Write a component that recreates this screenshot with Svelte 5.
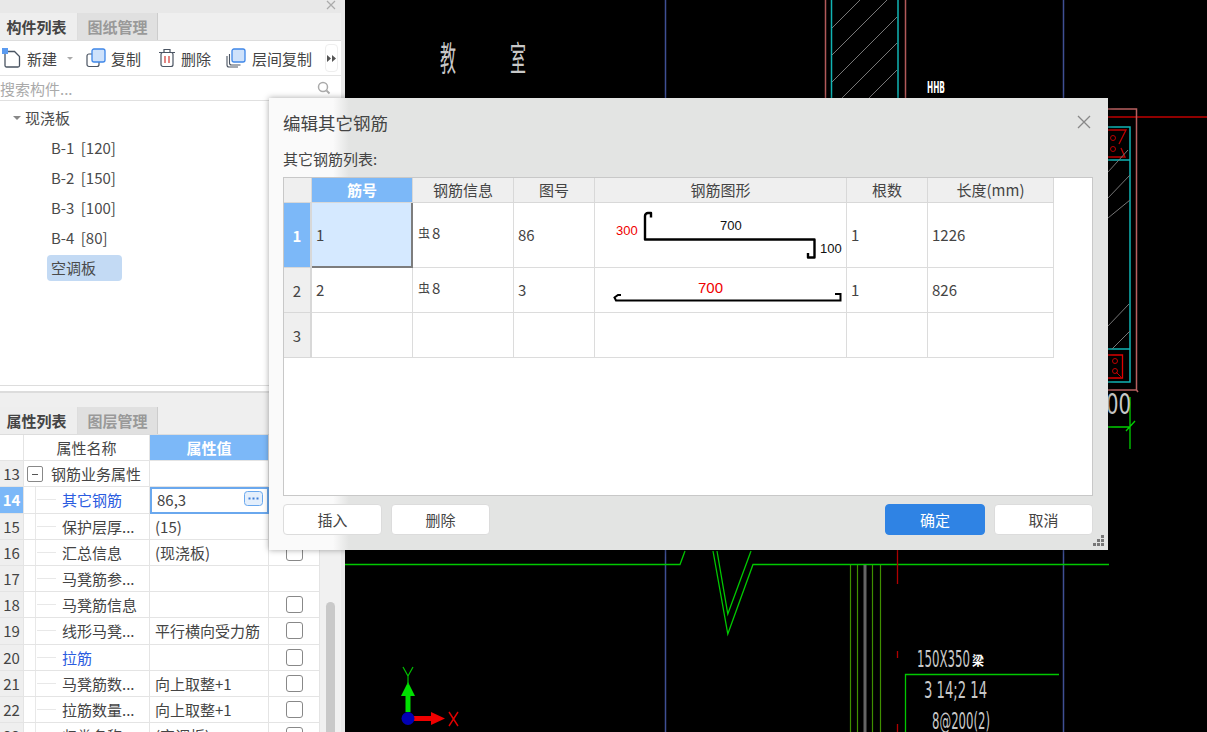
<script>
	const tree = ["B-1 [120]", "B-2 [150]", "B-3 [100]", "B-4 [80]"];

	// property rows of the lower panel
	const props = [
		{ n: 13, name: "钢筋业务属性", group: true },
		{ n: 14, name: "其它钢筋", value: "86,3", blue: true, active: true },
		{ n: 15, name: "保护层厚...", value: "(15)" },
		{ n: 16, name: "汇总信息", value: "(现浇板)", check: true },
		{ n: 17, name: "马凳筋参..." },
		{ n: 18, name: "马凳筋信息", check: true },
		{ n: 19, name: "线形马凳...", value: "平行横向受力筋", check: true },
		{ n: 20, name: "拉筋", blue: true, check: true },
		{ n: 21, name: "马凳筋数...", value: "向上取整+1", check: true },
		{ n: 22, name: "拉筋数量...", value: "向上取整+1", check: true },
		{ n: 23, name: "归类名称", value: "(空调板)", check: true }
	];

	const heads = ["筋号", "钢筋信息", "图号", "钢筋图形", "根数", "长度(mm)"];

	// hatching of the wall section on the drawing, y where each line leaves the left side
	const hatchTop = [28, 55, 82, 108, 135];
</script>

<div class="app">
	<aside class="side">
		<div class="closebar">
			<svg width="10" height="10" viewBox="0 0 10 10"><path d="M1 1l8 8M9 1l-8 8" stroke="#aaa" stroke-width="1.2" /></svg>
		</div>
		<div class="tabs">
			<div class="tab on">构件列表</div>
			<div class="tab">图纸管理</div>
		</div>
		<div class="toolbar">
			<div class="tool first">
				<svg width="20" height="20" viewBox="0 0 20 20">
					<path d="M3 3.5h9.5l5 5v9a1.5 1.5 0 0 1-1.5 1.5H4.500a1.500 1.500 0 0 1-1.500-1.500z" fill="#fff" stroke="#4a5462" stroke-width="1.3" />
					<rect x="0" y="0" width="6" height="6" fill="#5b9bf0" />
				</svg>
				<span>新建</span>
				<i class="caret"></i>
			</div>
			<div class="tool copy">
				<svg width="20" height="20" viewBox="0 0 20 20">
					<rect x="1" y="6" width="12" height="12.500" rx="2" fill="#fff" stroke="#4a5462" stroke-width="1.200" />
					<rect x="6" y="1" width="13" height="13" rx="2" fill="#cfe2fb" stroke="#3f87e8" stroke-width="1.300" />
				</svg>
				<span>复制</span>
			</div>
			<div class="tool del">
				<svg width="18" height="20" viewBox="0 0 18 20">
					<path d="M1 4.500h16M6 4V1.500h6V4" fill="none" stroke="#4a5462" stroke-width="1.200" />
					<rect x="3" y="4.500" width="12" height="14" rx="2" fill="#fff" stroke="#4a5462" stroke-width="1.200" />
					<path d="M7 8v7M11 8v7" stroke="#d9534f" stroke-width="1.400" />
				</svg>
				<span>删除</span>
			</div>
			<div class="tool floor">
				<svg width="20" height="20" viewBox="0 0 20 20">
					<path d="M1 8v9a2 2 0 0 0 2 2h9" fill="none" stroke="#4a5462" stroke-width="1.100" />
					<path d="M3.500 6v9a2 2 0 0 0 2 2h9" fill="none" stroke="#4a5462" stroke-width="1.100" />
					<rect x="6" y="1" width="13" height="13" rx="2" fill="#cfe2fb" stroke="#3f87e8" stroke-width="1.300" />
				</svg>
				<span>层间复制</span>
			</div>
			<div class="more">
				<svg width="9" height="7" viewBox="0 0 9 7"><path d="M0 0l4 3.500-4 3.500zM5 0l4 3.500-4 3.500z" fill="#555" /></svg>
			</div>
		</div>
		<div class="search">
			<span>搜索构件...</span>
			<svg width="14" height="14" viewBox="0 0 14 14"><circle cx="6" cy="6" r="4.500" fill="none" stroke="#aaa" stroke-width="1.500" /><path d="M9.500 9.500l3 3" stroke="#aaa" stroke-width="1.800" /></svg>
		</div>
		<div class="tree">
			<div class="node root"><i class="caret"></i>现浇板</div>
			{#each tree as t}
				<div class="node">{t}</div>
			{/each}
			<div class="node"><span class="picked">空调板</span></div>
		</div>
		<div class="splitter"></div>
		<div class="tabs second">
			<div class="tab on">属性列表</div>
			<div class="tab">图层管理</div>
		</div>
		<div class="propwrap">
			<div class="props">
				<div class="prow head">
					<div class="num"></div>
					<div class="pname">属性名称</div>
					<div class="pval selected">属性值</div>
					<div class="pchk"></div>
				</div>
				{#each props as p}
					<div class="prow">
						<div class="num" class:on={p.active}>{p.n}</div>
						{#if p.group}
							<div class="pname left group"><i class="minus"></i>{p.name}</div>
						{:else}
							<div class="pname left" class:blue={p.blue}><i class="branch"></i>{p.name}</div>
						{/if}
						<div class="pval left" class:edit={p.active}>
							{p.value ?? ""}
							{#if p.active}
								<svg class="dots" width="19" height="15" viewBox="0 0 19 15">
									<rect x="0.500" y="0.500" width="18" height="14" rx="3" fill="#e4effc" stroke="#6aa8ee" />
									<path d="M4.500 6.500h2v2h-2zM8.500 6.500h2v2h-2zM12.500 6.500h2v2h-2z" fill="#3f7fd8" />
								</svg>
							{/if}
						</div>
						<div class="pchk">
							{#if p.check}<i class="box"></i>{/if}
						</div>
					</div>
				{/each}
			</div>
			<div class="scroll"><div class="thumb"></div></div>
		</div>
	</aside>

	<div class="gutter"></div>

	<svg class="cad" width="862" height="732" viewBox="345 0 862 732">
		<!-- axis lines -->
		<path d="M665.500 0V732M1063.500 0V732" stroke="#3f4f94" stroke-width="1.500" />
		<path d="M1108 117H1207" stroke="#c00000" stroke-width="1.500" />

		<!-- column on top -->
		<path d="M825.500 0V100M905.500 0V100" stroke="#b35a5a" stroke-width="1.500" />
		<path d="M831.500 0V100M898 0V100" stroke="#10b4b4" stroke-width="1.500" />
		{#each hatchTop as y}
			<path d="M832 {y}L897 {y - 65}" stroke="#777" stroke-width="1" />
		{/each}

		<!-- wall right of the dialog -->
		<path d="M1100 109H1136.500V390M1100 390H1136.500l1.500 2" fill="none" stroke="#b86060" stroke-width="1.500" />
		<path d="M1100 127H1130V382H1100M1100 160H1130M1100 349H1130" fill="none" stroke="#10b4b4" stroke-width="1.500" />
		<path d="M1108 130H1126L1119 144M1121 148L1125 157H1108" fill="none" stroke="#c00000" stroke-width="1.300" />
		<circle cx="1113" cy="138" r="2.500" fill="none" stroke="#c00000" />
		<circle cx="1113" cy="149" r="2.500" fill="none" stroke="#c00000" />
		<path d="M1108 355H1122.500V378H1108" fill="none" stroke="#e00000" stroke-width="1.300" />
		<circle cx="1115" cy="361" r="2.500" fill="none" stroke="#c00000" />
		<circle cx="1115" cy="371" r="2.500" fill="none" stroke="#c00000" />
		<path d="M1116 372L1121 377" stroke="#c00000" />
		<path d="M1108 172L1128 150M1108 198L1130 175M1108 218L1130 200M1108 326L1129 304M1112 349L1130 331" stroke="#777" stroke-width="1" />

		<!-- bottom slab -->
		<path d="M345 564.500H680L685 551M713 551L727.800 634L753 564.500H1109M717 551L727.800 614L751 551" fill="none" stroke="#00c800" stroke-width="1.300" />
		<path d="M850.500 565V732M857.500 565V732M872.500 565V732M880.500 565V732" stroke="#3f8f00" stroke-width="1.200" />
		<path d="M865 565V732" stroke="#666" stroke-width="3" />
		<path d="M897.500 550V584M897.500 651V658M897.500 724V732" stroke="#b00000" stroke-width="1.300" />
		<path d="M905.500 732V674.500H1059" fill="none" stroke="#00c800" stroke-width="1.300" />
		<path d="M1130 397V449M1108 427H1130M1126 431L1135 421" fill="none" stroke="#00d000" stroke-width="1.300" />

		<!-- drawing labels -->
		<g class="cadtext">
			<text x="440" y="71" font-size="34" textLength="16" lengthAdjust="spacingAndGlyphs">教</text>
			<text x="510" y="71" font-size="34" textLength="16" lengthAdjust="spacingAndGlyphs">室</text>
			<text x="927" y="93" font-size="16" textLength="18" lengthAdjust="spacingAndGlyphs" class="bright">HHB</text>
			<text x="1106" y="414" font-size="28" textLength="25" lengthAdjust="spacingAndGlyphs">00</text>
			<text x="917" y="667" font-size="23" textLength="53" lengthAdjust="spacingAndGlyphs">150X350</text>
			<text x="972" y="665" font-size="13" textLength="12" lengthAdjust="spacingAndGlyphs" class="bright">梁</text>
			<text x="924" y="698" font-size="23" textLength="63" lengthAdjust="spacingAndGlyphs">3 14;2 14</text>
			<text x="932" y="729" font-size="23" textLength="58" lengthAdjust="spacingAndGlyphs">8@200(2)</text>
		</g>

		<!-- axis gizmo -->
		<path d="M408 712V691" stroke="#00e000" stroke-width="5" />
		<path d="M408 682L415 696H401z" fill="#00e000" />
		<path d="M414 718.500H431" stroke="#f00000" stroke-width="5" />
		<path d="M445 718.500L431 712V725z" fill="#f00000" />
		<circle cx="408" cy="718.500" r="6.500" fill="#0000b4" />
		<path d="M403 666L408 675L413 666M408 675V684" fill="none" stroke="#00c000" stroke-width="1.200" transform="translate(0 1)" />
		<path d="M449 712L458 726M458 712L449 726" stroke="#e00000" stroke-width="1.400" />
	</svg>

	<div class="dialog">
		<header class="dtitle">
			<span>编辑其它钢筋</span>
			<svg width="14" height="14" viewBox="0 0 14 14"><path d="M1 1l12 12M13 1L1 13" stroke="#888" stroke-width="1.300" /></svg>
		</header>
		<div class="dlabel">其它钢筋列表:</div>
		<div class="grid">
			<div class="gh corner"></div>
			{#each heads as h, i}
				<div class="gh" class:selected={i === 0}>{h}</div>
			{/each}
			<div class="gap"></div>

			<!-- row 1 -->
			<div class="gn on">1</div>
			<div class="gc cur">1</div>
			<div class="gc"><span class="dia"><small>虫</small>8</span></div>
			<div class="gc">86</div>
			<div class="gc shape">
				<svg width="251" height="64" viewBox="0 0 251 64">
					<path d="M56 14.500V10h-3a3 3 0 0 0-3 3V36.500H219.500V54.500H213V50" fill="none" stroke="#000" stroke-width="2.400" stroke-linejoin="round" />
					<text x="21" y="32" fill="#f00000">300</text>
					<text x="125" y="27" fill="#111">700</text>
					<text x="225" y="50" fill="#111">100</text>
				</svg>
			</div>
			<div class="gc">1</div>
			<div class="gc">1226</div>
			<div class="gap"></div>

			<!-- row 2 -->
			<div class="gn">2</div>
			<div class="gc">2</div>
			<div class="gc"><span class="dia"><small>虫</small>8</span></div>
			<div class="gc">3</div>
			<div class="gc shape">
				<svg width="251" height="44" viewBox="0 0 251 44">
					<path d="M26 27H23L19.500 29.500L21 32.500H245.500V26H240" fill="none" stroke="#000" stroke-width="2" />
					<text x="103" y="25" fill="#f00000" class="big">700</text>
				</svg>
			</div>
			<div class="gc">1</div>
			<div class="gc">826</div>
			<div class="gap"></div>

			<!-- row 3 -->
			<div class="gn">3</div>
			<div class="gc"></div>
			<div class="gc"></div>
			<div class="gc"></div>
			<div class="gc"></div>
			<div class="gc"></div>
			<div class="gc"></div>
			<div class="gap"></div>
		</div>
		<footer class="dfoot">
			<button>插入</button>
			<button>删除</button>
			<span class="spacer"></span>
			<button class="primary">确定</button>
			<button>取消</button>
		</footer>
		<svg class="grip" width="11" height="11" viewBox="0 0 11 11">
			<path d="M8 0h3v3H8zM4 4h3v3H4zM8 4h3v3H8zM0 8h3v3H0zM4 8h3v3H4zM8 8h3v3H8z" fill="#777" />
		</svg>
	</div>
</div>

<style>
	:global(body) {
		margin: 0;
		background: #000;
	}

	.app {
		position: relative;
		display: flex;
		width: 1207px;
		height: 732px;
		overflow: hidden;
		font-family: "Noto Sans CJK SC", "Noto Sans", sans-serif;
		font-size: 15px;
		color: #444;
	}

	.side {
		width: 341px;
		flex: none;
		background: #fff;
		display: flex;
		flex-direction: column;
		overflow: hidden;
	}

	.gutter {
		width: 4px;
		flex: none;
		background: #e9e9e9;
	}

	.cad {
		flex: none;
		background: #000;
		display: block;
	}

	.cadtext text {
		fill: #c8c8c8;
		font-family: "DejaVu Sans", "Noto Sans CJK SC", sans-serif;
	}

	.cadtext .bright {
		fill: #fff;
		font-weight: 700;
	}

	/* left panel */
	.closebar {
		height: 13px;
		background: #e8e8e8;
		display: flex;
		justify-content: flex-end;
		padding-right: 5px;
	}

	.tabs {
		display: flex;
		height: 27px;
		background: #efefef;
		border-bottom: 1px solid #ddd;
	}

	.tab {
		width: 80px;
		background: #e0e0e0;
		color: #999;
		font-weight: 700;
		text-align: center;
		line-height: 27px;
		border-right: 1px solid #ccc;
		box-sizing: border-box;
	}

	.tab.on {
		width: 78px;
		padding-right: 4px;
		background: #eeeeee;
		color: #444;
		border-right: 1px solid #ddd;
	}

	.toolbar {
		height: 34px;
		display: flex;
		align-items: center;
		border-bottom: 1px solid #e4e4e4;
		padding-left: 2px;
		position: relative;
	}

	.tool {
		display: flex;
		align-items: center;
		gap: 5px;
	}

	.first {
		width: 84px;
	}

	.copy {
		width: 72px;
	}

	.del {
		width: 68px;
	}

	.floor {
		width: 99px;
		gap: 6px;
		white-space: nowrap;
	}

	.caret {
		display: inline-block;
		width: 0;
		height: 0;
		border: 4px solid transparent;
		border-top: 4px solid #888;
		border-bottom: 0;
	}

	.first .caret {
		margin-left: 5px;
		border-width: 3px 3px 0;
		border-top-color: #aaa;
	}

	.more {
		width: 13px;
		height: 28px;
		border: 1px solid #eee;
		border-radius: 4px;
		display: flex;
		align-items: center;
		justify-content: center;
		box-sizing: border-box;
	}

	.search {
		height: 24px;
		display: flex;
		align-items: center;
		justify-content: space-between;
		padding-right: 10px;
		color: #aaa;
		border-bottom: 1px solid #e0e0e0;
	}

	.tree {
		height: 285px;
		padding-top: 2px;
		box-sizing: border-box;
		border-bottom: 1px solid #ddd;
	}

	.node {
		height: 30px;
		line-height: 30px;
		padding-left: 51px;
		color: #4a4a4a;
		word-spacing: 3px;
	}

	.node.root {
		padding-left: 13px;
		display: flex;
		align-items: center;
		gap: 4px;
	}

	.picked {
		display: inline-block;
		height: 26px;
		line-height: 26px;
		width: 75px;
		margin-left: -4px;
		padding-left: 4px;
		box-sizing: border-box;
		background: #c3daf4;
		border-radius: 4px;
	}

	.splitter {
		height: 21px;
		background: linear-gradient(#fff 0 5px, #dcdcdc 5px 7px, #efefef 7px);
	}

	.second {
		height: 27px;
		flex: none;
	}

	.propwrap {
		display: flex;
		flex: 1;
		overflow: hidden;
	}

	.props {
		width: 320px;
		flex: none;
	}

	.prow {
		display: grid;
		grid-template-columns: 24px 126px 119px 51px;
		height: 26.2px;
		box-sizing: border-box;
	}

	.prow > div {
		border-right: 1px solid #e4e4e4;
		border-bottom: 1px solid #e4e4e4;
		box-sizing: border-box;
		line-height: 25px;
		white-space: nowrap;
		overflow: hidden;
	}

	.head > div {
		text-align: center;
	}

	.num {
		background: #efefef;
		text-align: center;
	}

	.head .num {
		background: #fff;
	}

	.num.on {
		background: #7cb8f8;
		color: #fff;
		font-weight: 700;
	}

	.left {
		padding-left: 5px;
	}

	.pname.left {
		padding-left: 38px;
		position: relative;
	}

	.pname.group {
		padding-left: 27px;
	}

	.blue {
		color: #2b5ce0;
	}

	.branch {
		position: absolute;
		left: 11px;
		top: 0;
		bottom: 0;
		width: 20px;
		border-left: 1px solid #e8e8e8;
		background: linear-gradient(#e8e8e8, #e8e8e8) 1px 12px / 19px 1px no-repeat;
	}

	.minus {
		position: absolute;
		left: 3px;
		top: 5px;
		width: 14px;
		height: 14px;
		border: 1px solid #888;
		border-radius: 2px;
		background: linear-gradient(#555, #555) center / 6px 1px no-repeat;
	}

	.selected {
		background: #7cb8f8;
		color: #fff;
		font-weight: 700;
	}

	.prow .edit {
		border: 2px solid #6aa8ee;
		padding-left: 5px;
		position: relative;
		line-height: 22px;
	}

	.dots {
		position: absolute;
		right: 4px;
		top: 2px;
	}

	.pchk {
		display: flex;
		align-items: center;
		justify-content: center;
	}

	.box {
		width: 17px;
		height: 17px;
		border: 1px solid #888;
		border-radius: 3px;
		box-sizing: border-box;
	}

	.scroll {
		flex: 1;
		background: #f1f1f1;
		padding: 167px 6px 0;
	}

	.thumb {
		height: 200px;
		border-radius: 5px;
		background: #c9c9c9;
	}

	/* dialog */
	.dialog {
		position: absolute;
		left: 269px;
		top: 98px;
		width: 839px;
		height: 452px;
		box-sizing: border-box;
		padding: 0 15px 0 14px;
		display: flex;
		flex-direction: column;
		background: linear-gradient(90deg, #fafafa 0 64px, #e3e4e3 80px);
		box-shadow: 0 0 6px rgba(0, 0, 0, 0.35);
	}

	.dtitle {
		height: 50px;
		padding-bottom: 2px;
		box-sizing: border-box;
		display: flex;
		align-items: center;
		justify-content: space-between;
		padding-right: 2px;
		font-size: 17.5px;
		flex: none;
	}

	.dlabel {
		height: 29px;
		line-height: 22px;
		font-size: 15px;
		flex: none;
	}

	.grid {
		flex: none;
		height: 319px;
		box-sizing: border-box;
		display: grid;
		grid-template-columns: 28px 101px 101px 81px 252px 81px 126px 1fr;
		grid-template-rows: 25px 65px 45px 45px;
		align-content: start;
		background: #fff;
		border: 1px solid #c8c8c8;
	}

	.grid > div {
		box-sizing: border-box;
	}

	.gh {
		background: #efefef;
		border-right: 1px solid #d8d8d8;
		border-bottom: 1px solid #d8d8d8;
		text-align: center;
		line-height: 24px;
	}

	.gh.selected {
		background: #7cb8f8;
		color: #fff;
		font-weight: 700;
	}

	.gn {
		background: #efefef;
		border-right: 2px solid #d8d8d8;
		border-bottom: 1px solid #d8d8d8;
		display: flex;
		align-items: center;
		justify-content: center;
	}

	.gn.on {
		background: #7cb8f8;
		color: #fff;
		font-weight: 700;
	}

	.gc {
		border-right: 1px solid #dcdcdc;
		border-bottom: 1px solid #dcdcdc;
		display: flex;
		align-items: center;
		padding: 0 0 1px 4px;
	}

	.gc.cur {
		background: #d5e9ff;
		border-right: 2px solid #7d7d7d;
		border-bottom: 2px solid #7d7d7d;
	}

	.dia {
		margin-top: -5px;
		margin-left: 1px;
	}

	.dia small {
		font-size: 12px;
		position: relative;
		top: -1px;
		margin-right: 2px;
	}

	.gc.shape {
		padding: 0;
	}

	.shape svg {
		display: block;
	}

	.shape text {
		font-family: "Liberation Sans", sans-serif;
		font-size: 13px;
	}

	.shape text.big {
		font-size: 15px;
	}

	.dfoot {
		flex: none;
		display: flex;
		gap: 9px;
		margin-top: 8px;
		height: 31px;
	}

	.spacer {
		flex: 1;
	}

	.dfoot button {
		width: 99px;
		height: 31px;
		border: 1px solid #dcdcdc;
		border-radius: 4px;
		background: #fff;
		color: #444;
		font: inherit;
		padding: 0;
	}

	.dfoot .primary {
		width: 100px;
		background: #2f83e4;
		border-color: #2f83e4;
		color: #fff;
	}

	.grip {
		position: absolute;
		right: 4px;
		bottom: 4px;
	}
</style>
